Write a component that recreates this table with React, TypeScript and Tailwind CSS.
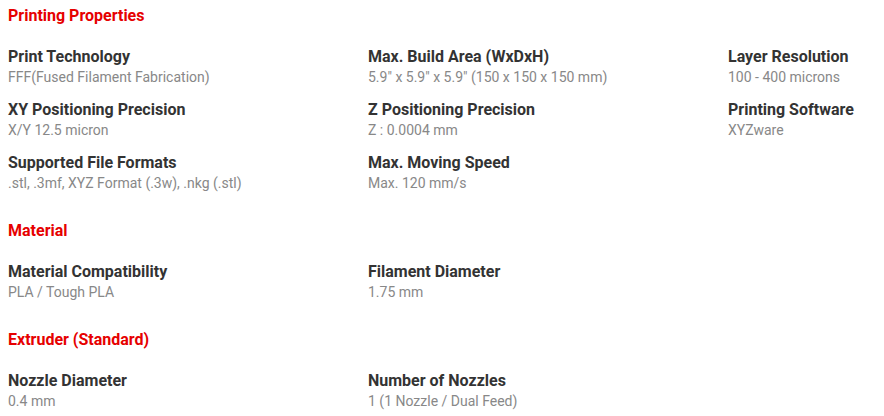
type Spec = { label: string; value: string }

const sections: { title: string; specs: Spec[] }[] = [
  {
    title: 'Printing Properties',
    specs: [
      { label: 'Print Technology', value: 'FFF(Fused Filament Fabrication)' },
      { label: 'Max. Build Area (WxDxH)', value: '5.9" x 5.9" x 5.9" (150 x 150 x 150 mm)' },
      { label: 'Layer Resolution', value: '100 - 400 microns' },
      { label: 'XY Positioning Precision', value: 'X/Y 12.5 micron' },
      { label: 'Z Positioning Precision', value: 'Z : 0.0004 mm' },
      { label: 'Printing Software', value: 'XYZware' },
      { label: 'Supported File Formats', value: '.stl, .3mf, XYZ Format (.3w), .nkg (.stl)' },
      { label: 'Max. Moving Speed', value: 'Max. 120 mm/s' },
    ],
  },
  {
    title: 'Material',
    specs: [
      { label: 'Material Compatibility', value: 'PLA / Tough PLA' },
      { label: 'Filament Diameter', value: '1.75 mm' },
    ],
  },
  {
    title: 'Extruder (Standard)',
    specs: [
      { label: 'Nozzle Diameter', value: '0.4 mm' },
      { label: 'Number of Nozzles', value: '1 (1 Nozzle / Dual Feed)' },
    ],
  },
]

export default function App() {
  return (
    <div className="min-h-screen bg-white px-2 pt-[6px] font-['Roboto',sans-serif]">
      {sections.map((section, i) => (
        <section key={section.title} className={i > 0 ? 'mt-[28px]' : ''}>
          <h2 className="text-base font-bold leading-5 text-[#e60000]">{section.title}</h2>
          <div className="mt-[21px] grid grid-cols-[360px_360px_1fr] gap-y-[13px]">
            {section.specs.map((spec) => (
              <div key={spec.label}>
                <p className="text-base font-bold leading-5 text-[#333333]">{spec.label}</p>
                <p className="text-sm leading-5 text-[#888888]">{spec.value}</p>
              </div>
            ))}
          </div>
        </section>
      ))}
    </div>
  )
}
